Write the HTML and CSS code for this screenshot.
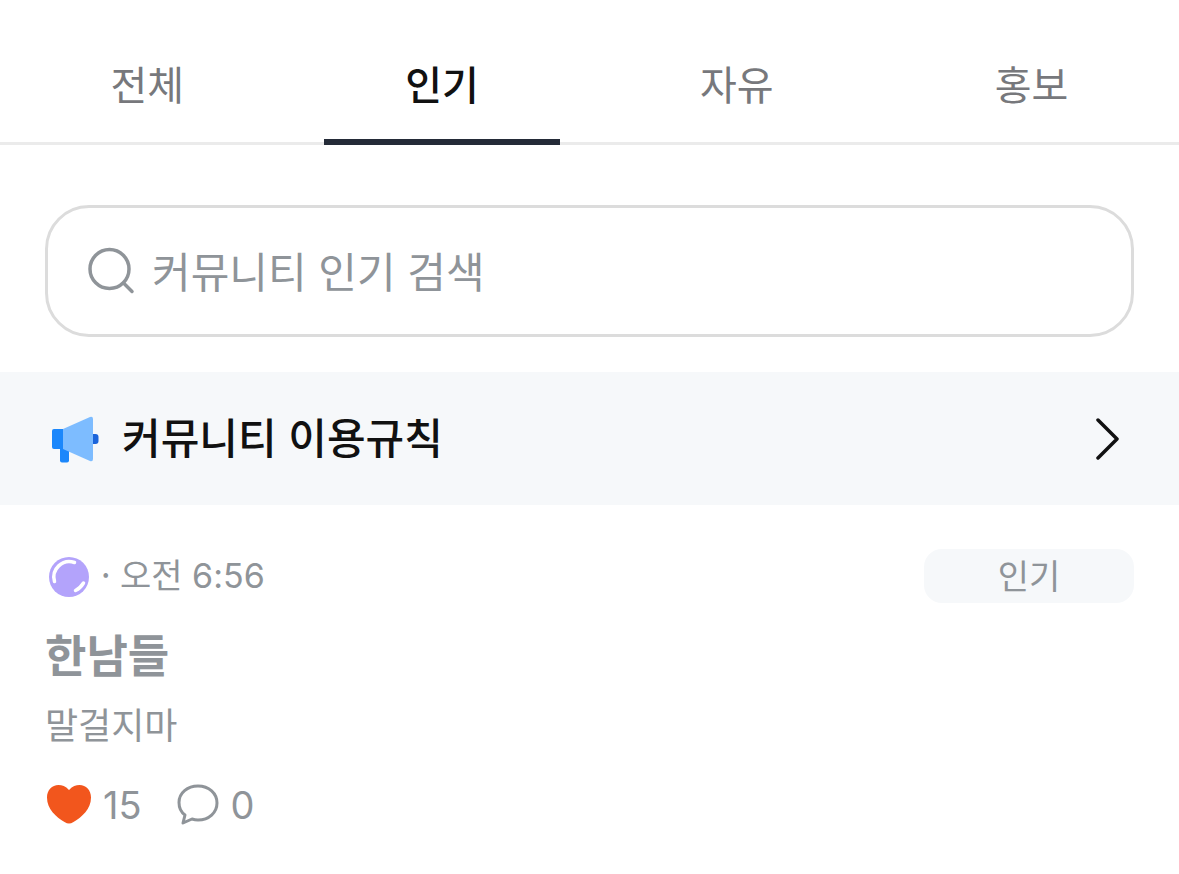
FILE: index.html
```html
<!DOCTYPE html>
<html lang="ko">
<head>
    <meta charset="UTF-8">
    <meta name="viewport" content="width=device-width, initial-scale=1.0">
    <title>커뮤니티</title>
    <link rel="stylesheet" href="styles.css">
</head>
<body>
    <nav class="tabs">
        <a class="tab" href="#all">전체</a>
        <a class="tab active" href="#popular">인기</a>
        <a class="tab" href="#free">자유</a>
        <a class="tab" href="#promo">홍보</a>
    </nav>

    <main>
        <form class="search">
            <label for="search-input" aria-label="검색">
                <svg width="48" height="48" viewBox="0 0 48 48" fill="none" stroke="#8f9499" stroke-width="3.500" stroke-linecap="round">
                    <circle cx="21.500" cy="22" r="19.500"/>
                    <path d="M35.500 36L44 44.500"/>
                </svg>
            </label>
            <input id="search-input" type="text" placeholder="커뮤니티 인기 검색">
        </form>

        <a class="notice" href="#rules">
            <svg width="50" height="50" viewBox="0 0 50 50">
                <path d="M10 30h9v15.500a2 2 0 0 1-2 2h-5a2 2 0 0 1-2-2z" fill="#1b87fb"/>
                <rect x="40" y="19" width="8.500" height="10" rx="3" fill="#1b64da"/>
                <path d="M13 14H4a2 2 0 0 0-2 2v16a2 2 0 0 0 2 2h9z" fill="#1b87fb"/>
                <path d="M13 14L40 2q3-1 3 2v40q0 3-3 2L13 34z" fill="#7dbcff"/>
            </svg>
            <span class="notice-text">커뮤니티 이용규칙</span>
            <svg width="28" height="44" viewBox="0 0 28 44" fill="none" stroke="#111" stroke-width="3.500" stroke-linecap="round" stroke-linejoin="round">
                <path d="M4 2L23 21L4 40"/>
            </svg>
        </a>

        <article class="post">
            <div class="post-head">
                <svg width="40" height="42" viewBox="0 0 40 42" fill="none" stroke="#fff" stroke-width="3.500" stroke-linecap="round">
                    <circle cx="20" cy="22" r="20" fill="#b3a3fb" stroke="none"/>
                    <path d="M5.500 26.500A15.500 15.500 0 0 1 25.500 7.500"/>
                    <path d="M34.500 28Q31.500 33 26.500 35.500"/>
                </svg>
                <span class="time">· 오전 <span class="num">6:56</span></span>
                <span class="badge">인기</span>
            </div>
            <h2 class="title">한남들</h2>
            <p class="content">말걸지마</p>
            <div class="reactions">
                <button class="reaction" type="button" aria-label="좋아요">
                    <svg width="46" height="42" viewBox="0 0 46 42">
                        <path d="M24 6C20.500 2 17 1 13.500 1C7 1 2 6 2 13.500C2 25 11 33 19.500 38Q22 39.500 24 39.500Q26 39.500 28.500 38C37 33 46 25 46 13.500C46 6 41 1 34.500 1C31 1 27.500 2 24 6z" fill="#f2561d"/>
                    </svg>
                    <span class="num">15</span>
                </button>
                <button class="reaction" type="button" aria-label="댓글">
                    <svg width="42" height="42" viewBox="0 0 42 42" fill="none" stroke="#8f9499" stroke-width="3" stroke-linejoin="round">
                        <path d="M21 2C10.500 2 2 9 2 18.500C2 24.500 4.500 28.500 8 31L6 39L15 35Q18 36 21 36C32 36 40 28.500 40 19C40 9.500 32 2 21 2z"/>
                    </svg>
                    <span class="num">0</span>
                </button>
            </div>
        </article>
    </main>
</body>
</html>
```

FILE: styles.css
```css
* {
    box-sizing: border-box;
}
body {
    margin: 0;
    background: #fff;
    color: #8f9499;
    font-family: "Noto Sans CJK KR", sans-serif;
}
a {
    color: inherit;
    text-decoration: none;
}
svg {
    display: block;
    flex: none;
}
.num {
    font-family: Inter, sans-serif;
}
.tabs {
    display: flex;
    border-bottom: 3px solid #ebebeb;
}
.tab {
    flex: 1;
    display: flex;
    flex-direction: column;
    align-items: center;
    padding-top: 53px;
    margin-bottom: -3px;
    color: #77787c;
    font-size: 40px;
    line-height: 60px;
}
.tab::after {
    content: "";
    width: 80%;
    height: 6px;
    margin-top: 26px;
}
.tab.active {
    color: #111;
    font-weight: 500;
}
.tab.active::after {
    background: #242b38;
}
.search {
    display: flex;
    align-items: center;
    gap: 16px;
    margin: 60px 45px 35px;
    padding: 32px 40px;
    border: 3px solid #dcdcdc;
    border-radius: 44px;
}
.search input {
    flex: 1;
    min-width: 0;
    height: 62px;
    padding: 0 0 4px;
    border: 0;
    outline: 0;
    background: none;
    color: #111;
    font-family: inherit;
    font-size: 42px;
}
.search input::placeholder {
    color: #8f9499;
}
.notice {
    display: flex;
    align-items: center;
    gap: 22px;
    padding: 38px 57px 35px 50px;
    background: #f6f8fa;
    color: #111;
    font-size: 42px;
    font-weight: 500;
    line-height: 52px;
}
.notice-text {
    flex: 1;
    padding-bottom: 8px;
}
.post {
    padding: 43px 45px;
}
.post-head {
    display: flex;
    align-items: center;
    gap: 12px;
    padding-left: 4px;
    font-size: 34px;
    line-height: 52px;
}
.time {
    flex: 1;
    padding-bottom: 2px;
}
.badge {
    width: 210px;
    padding-bottom: 2px;
    border-radius: 18px;
    background: #f6f8fa;
    text-align: center;
}
.title {
    margin: 17px 0 0;
    font-size: 45px;
    font-weight: 700;
    line-height: 66px;
}
.content {
    margin: 9px 0 0;
    font-size: 36px;
    line-height: 54px;
}
.reactions {
    display: flex;
    gap: 35px;
    margin-top: 28px;
}
.reaction {
    display: flex;
    align-items: center;
    gap: 12px;
    padding: 0;
    border: 0;
    background: none;
    color: inherit;
    font-family: inherit;
    font-size: 38px;
    line-height: 54px;
}
```
